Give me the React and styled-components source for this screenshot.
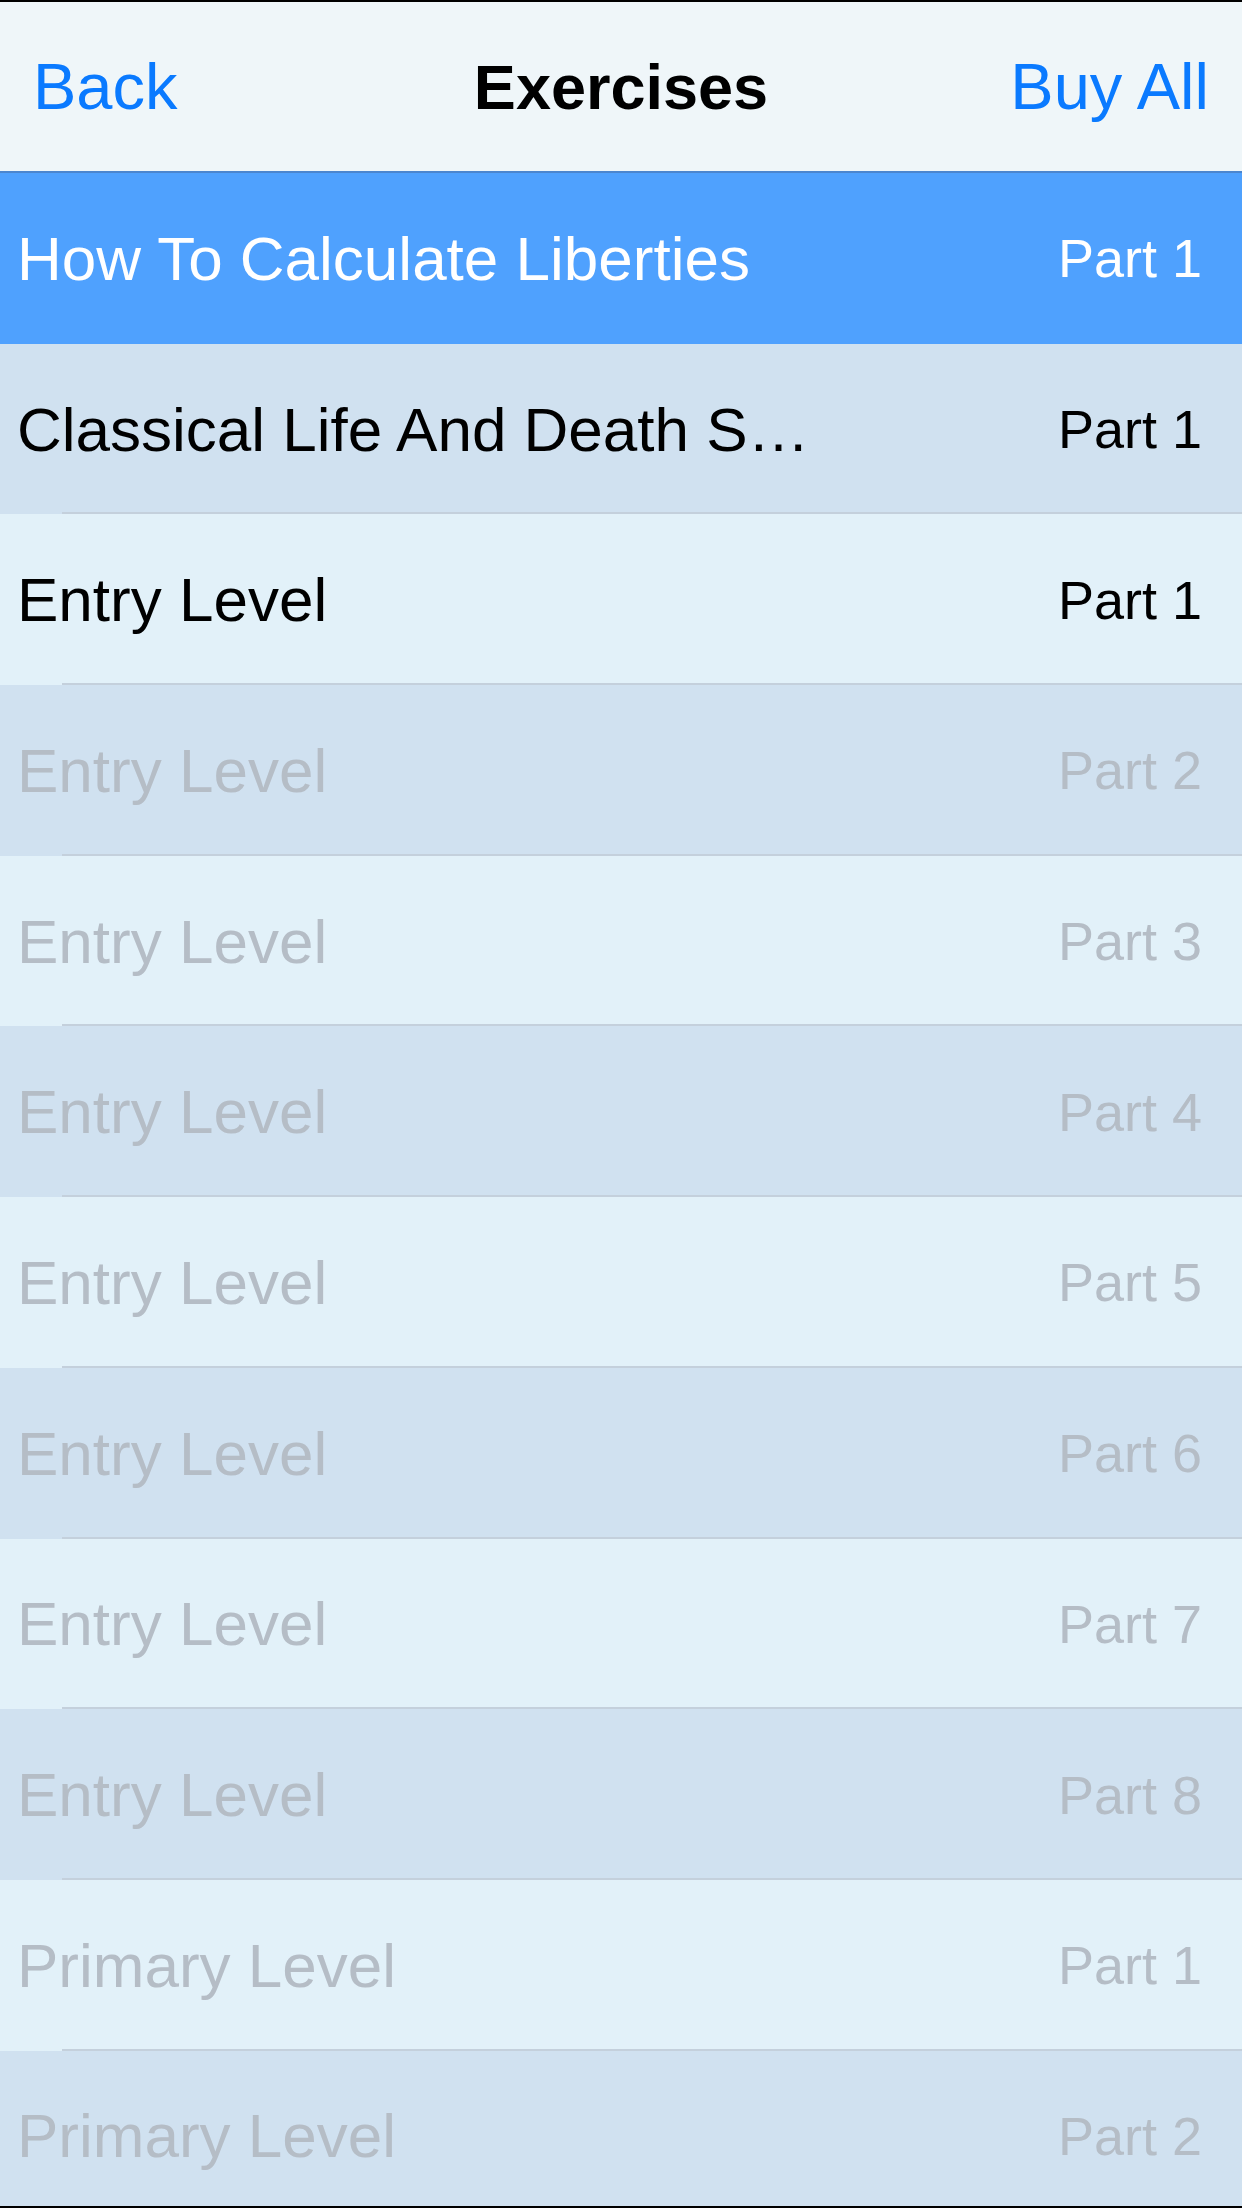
import React from 'react'
import styled, { createGlobalStyle } from 'styled-components'

const GlobalStyle = createGlobalStyle`
  html, body {
    margin: 0;
    padding: 0;
    background: #000;
  }
  * {
    box-sizing: border-box;
  }
`

const Screen = styled.div`
  width: 1242px;
  height: 2208px;
  border-top: 2px solid #000;
  border-bottom: 2px solid #000;
  background: #e2f1f9;
  overflow: hidden;
  display: flex;
  flex-direction: column;
  font-family: "Liberation Sans", Arial, Helvetica, sans-serif;
`

const NavBar = styled.header`
  flex: 0 0 auto;
  height: 171px;
  display: grid;
  grid-template-columns: 1fr auto 1fr;
  align-items: center;
  padding: 0 33px;
  background: #eff6f9;
  border-bottom: 2px solid #4b86cf;
`

const NavButton = styled.button`
  border: 0;
  padding: 0;
  background: none;
  font: inherit;
  font-size: 65px;
  color: #0a7aff;
  justify-self: ${p => (p.$end ? 'end' : 'start')};
  cursor: pointer;
`

const NavTitle = styled.h1`
  margin: 0;
  font-size: 63px;
  font-weight: 700;
  color: #000;
`

const List = styled.ul`
  list-style: none;
  margin: 0;
  padding: 0;
  flex: 1 1 auto;
`

const rowBg = p => {
  if (p.$selected) return '#4fa1fe'
  const base = p.$odd ? '#d0e1f0' : '#e2f1f9'
  return `linear-gradient(#c4d0dc, #c4d0dc) 62px 100% / calc(100% - 62px) 2px no-repeat, ${base}`
}

const textColor = p => {
  if (p.$selected) return '#fff'
  if (p.$locked) return '#b5bdc6'
  return '#000'
}

const Row = styled.li`
  height: 170.7px;
  display: flex;
  align-items: center;
  justify-content: space-between;
  padding: 0 40px 0 17px;
  background: ${rowBg};
  color: ${textColor};
`

const Title = styled.span`
  font-size: 62px;
  white-space: nowrap;
  overflow: hidden;
  text-overflow: ellipsis;
  max-width: 900px;
`

const Part = styled.span`
  font-size: 54px;
  white-space: nowrap;
`

const exercises = [
  { title: 'How To Calculate Liberties', part: 1, unlocked: true },
  { title: 'Classical Life And Death S…', part: 1, unlocked: true },
  { title: 'Entry Level', part: 1, unlocked: true },
  { title: 'Entry Level', part: 2 },
  { title: 'Entry Level', part: 3 },
  { title: 'Entry Level', part: 4 },
  { title: 'Entry Level', part: 5 },
  { title: 'Entry Level', part: 6 },
  { title: 'Entry Level', part: 7 },
  { title: 'Entry Level', part: 8 },
  { title: 'Primary Level', part: 1 },
  { title: 'Primary Level', part: 2 }
]

export default function App () {
  return (
    <Screen>
      <GlobalStyle />
      <NavBar>
        <NavButton>Back</NavButton>
        <NavTitle>Exercises</NavTitle>
        <NavButton $end>Buy All</NavButton>
      </NavBar>
      <List>
        {exercises.map((ex, i) => (
          <Row
            key={i}
            $selected={i === 0}
            $odd={i % 2 === 1}
            $locked={!ex.unlocked}
          >
            <Title>{ex.title}</Title>
            <Part>Part {ex.part}</Part>
          </Row>
        ))}
      </List>
    </Screen>
  )
}
